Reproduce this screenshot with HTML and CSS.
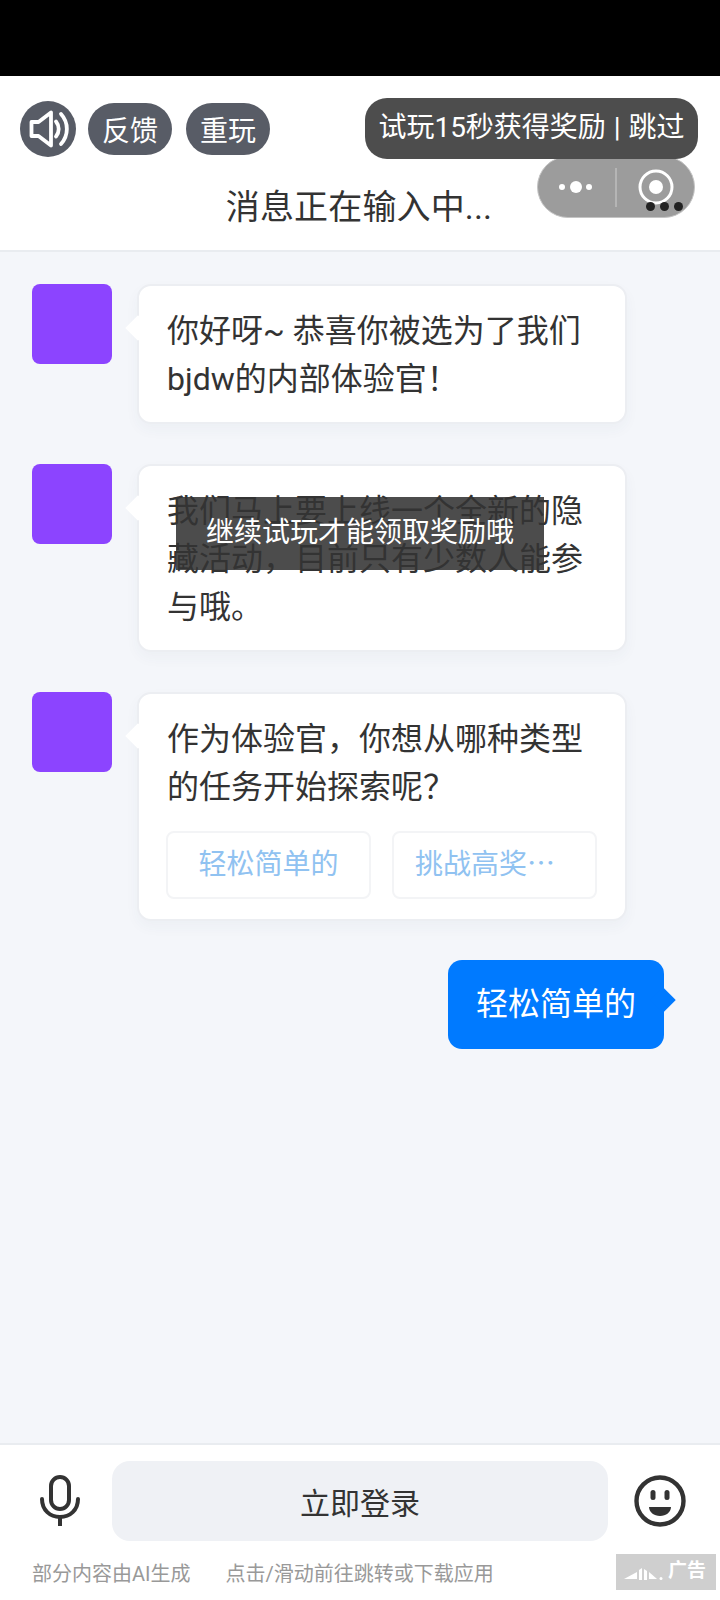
FILE: index.html
```html
<!DOCTYPE html>
<html lang="zh">
<head>
    <meta charset="UTF-8">
    <meta name="viewport" content="width=device-width, initial-scale=1.0">
    <title>消息正在输入中...</title>
    <link rel="stylesheet" href="styles.css">
</head>
<body>
    <div class="page">
        <div class="status-bar"></div>

        <header class="header">
            <div class="tools">
                <button class="sound-btn" type="button">
                    <svg width="56" height="56" viewBox="0 0 56 56" fill="none" stroke="#fff" stroke-width="3.8" stroke-linejoin="round" stroke-linecap="round">
                        <path d="M11.5 21h7L31 11.5v33L18.5 35h-7z"/>
                        <path d="M36 20.5c3.600 4.400 3.600 10.600 0 15"/>
                        <path d="M41 13c7.800 8.600 7.800 21.400 0 30"/>
                    </svg>
                </button>
                <button class="tool-pill" type="button">反馈</button>
                <button class="tool-pill tool-pill-last" type="button">重玩</button>
                <div class="skip-pill">试玩15秒获得奖励 | 跳过</div>
            </div>
            <h1 class="title">消息正在输入中...</h1>
        </header>

        <!-- 小程序胶囊，盖在头部上面 -->
        <div class="capsule">
            <svg width="56" height="20" viewBox="0 0 56 20" fill="#fff">
                <circle cx="10" cy="10" r="3"/>
                <circle cx="24" cy="10" r="6"/>
                <circle cx="37" cy="10" r="3"/>
            </svg>
            <span class="capsule-line"></span>
            <svg width="38" height="38" viewBox="0 0 38 38" fill="#fff">
                <circle cx="19" cy="19" r="16" fill="none" stroke="#fff" stroke-width="3"/>
                <circle cx="19" cy="19" r="7"/>
            </svg>
        </div>
        <div class="more-dots"><span></span><span></span><span></span></div>

        <main class="chat">
            <div class="msg">
                <div class="avatar"></div>
                <div class="bubble">你好呀~ 恭喜你被选为了我们bjdw的内部体验官！</div>
            </div>
            <div class="msg">
                <div class="avatar"></div>
                <div class="bubble">我们马上要上线一个全新的隐藏活动，目前只有少数人能参与哦。</div>
            </div>
            <div class="msg">
                <div class="avatar"></div>
                <div class="bubble">
                    作为体验官，你想从哪种类型的任务开始探索呢？
                    <div class="options">
                        <div class="option">轻松简单的</div>
                        <div class="option option-clip">挑战高奖⋯</div>
                    </div>
                </div>
            </div>
            <div class="msg msg-me">
                <div class="bubble-me">轻松简单的</div>
            </div>
        </main>

        <div class="toast">继续试玩才能领取奖励哦</div>

        <footer class="footer">
            <div class="input-row">
                <svg class="mic" width="40" height="52" viewBox="0 0 40 52" fill="none" stroke="#333" stroke-width="4" stroke-linecap="round">
                    <rect x="11" y="2" width="18" height="32" rx="9"/>
                    <path d="M2 24c0 11 8 18 18 18s18-7 18-18"/>
                    <path d="M20 42v9" stroke-linecap="butt"/>
                </svg>
                <button class="login-btn" type="button">立即登录</button>
                <svg class="smile" width="52" height="52" viewBox="0 0 52 52" fill="none">
                    <circle cx="26" cy="26" r="23.500" stroke="#333" stroke-width="4.400"/>
                    <rect x="16.500" y="15" width="5" height="10" rx="2.500" fill="#333"/>
                    <rect x="30.500" y="15" width="5" height="10" rx="2.500" fill="#333"/>
                    <path d="M15 32h22c0 5-5 9-11 9s-11-4-11-9z" fill="#333"/>
                </svg>
            </div>
            <div class="note-row">
                <span class="note">部分内容由AI生成</span>
                <span class="note note-link">点击/滑动前往跳转或下载应用</span>
                <div class="ad-badge">
                    <svg width="39" height="12" viewBox="0 0 39 12" fill="#fff">
                        <path d="M0 11 13 4v7z"/>
                        <path d="M15 2l3-2v12h-3z"/>
                        <path d="M20 1l3 2v9h-3z"/>
                        <path d="M25 4l8 7h-8z"/>
                        <circle cx="37" cy="10.500" r="1.500"/>
                    </svg>
                    <span>广告</span>
                </div>
            </div>
        </footer>
    </div>
</body>
</html>
```

FILE: styles.css
```css
* {
    box-sizing: border-box;
}

body {
    margin: 0;
    font-family: Roboto, "Noto Sans CJK SC", sans-serif;
    color: #333;
    background-color: #f4f6fa;
}

button {
    font-family: inherit;
    border: none;
    padding: 0;
}

.page {
    position: relative;
    width: 720px;
    height: 1600px;
    display: flex;
    flex-direction: column;
    overflow: hidden;
}

.status-bar {
    height: 76px;
    background-color: #000;
}

.header {
    background-color: #fff;
    border-bottom: 2px solid #e9ecf0;
    padding: 22px 22px 19px 20px;
}

.tools {
    display: flex;
    align-items: center;
}

.sound-btn {
    width: 56px;
    height: 56px;
    border-radius: 50%;
    background-color: #585c66;
}

.sound-btn svg {
    display: block;
}

.tool-pill {
    width: 84px;
    height: 52px;
    margin-left: 12px;
    border-radius: 26px;
    background-color: #585c66;
    color: #fff;
    font-size: 28px;
}

.tool-pill-last {
    margin-left: 14px;
}

.skip-pill {
    position: relative;
    z-index: 3;
    margin-left: auto;
    width: 333px;
    height: 61px;
    line-height: 60px;
    text-align: center;
    border-radius: 22px;
    background-color: #4d4d4d;
    color: #fff;
    font-size: 28px;
    word-spacing: 1px;
    white-space: nowrap;
}

.title {
    margin: 24px 0 0;
    font-size: 34px;
    font-weight: 400;
    letter-spacing: 0.15px;
    line-height: 48px;
    text-align: center;
}

.capsule {
    position: absolute;
    z-index: 2;
    left: 537px;
    top: 156px;
    width: 158px;
    height: 62px;
    border-radius: 31px;
    background-color: #9c9c9c;
    border: 1px solid #c4c4c4;
    display: flex;
    align-items: center;
    padding-left: 14px;
}

.capsule-line {
    width: 2px;
    height: 39px;
    margin: 0 20px 0 7px;
    background-color: #b5b5b5;
}

.capsule svg {
    flex-shrink: 0;
}

.more-dots {
    position: absolute;
    z-index: 2;
    left: 646px;
    top: 202px;
    display: flex;
    gap: 5px;
}

.more-dots span {
    width: 9px;
    height: 9px;
    border-radius: 50%;
    background-color: #222;
}

.chat {
    flex: 1;
    padding: 32px 56px 0 32px;
    display: flex;
    flex-direction: column;
    gap: 40px;
}

.msg {
    display: flex;
    align-items: flex-start;
}

.msg-me {
    justify-content: flex-end;
    margin-top: -1px;
}

.avatar {
    width: 80px;
    height: 80px;
    flex-shrink: 0;
    border-radius: 8px;
    background-color: #8c44ff;
}

.bubble {
    position: relative;
    width: 490px;
    margin-left: 25px;
    padding: 21px 28px 19px;
    background-color: #fff;
    border: 2px solid #eceef2;
    border-radius: 14px;
    box-shadow: 0 6px 14px rgba(60, 70, 100, 0.04);
    font-size: 32px;
    line-height: 48px;
}

.bubble::before {
    content: "";
    position: absolute;
    left: -10px;
    top: 33px;
    width: 18px;
    height: 18px;
    background-color: #fff;
    transform: rotate(45deg);
}

.options {
    display: flex;
    gap: 21px;
    margin: 20px -1px 1px;
}

.option {
    width: 205px;
    height: 68px;
    line-height: 64px;
    text-align: center;
    border: 2px solid #f3f4f6;
    border-radius: 8px;
    color: #90c2f1;
    font-size: 28px;
}

.option-clip {
    text-align: left;
    padding-left: 21px;
}

.bubble-me {
    position: relative;
    padding: 20px 28px 21px;
    background-color: #007aff;
    border-radius: 14px;
    color: #fff;
    font-size: 32px;
    line-height: 48px;
}

.bubble-me::after {
    content: "";
    position: absolute;
    right: -8px;
    top: 31px;
    width: 18px;
    height: 18px;
    background-color: #007aff;
    transform: rotate(45deg);
}

.toast {
    position: absolute;
    z-index: 4;
    left: 176px;
    top: 497px;
    width: 368px;
    height: 73px;
    line-height: 72px;
    text-align: center;
    background-color: rgba(51, 51, 51, 0.88);
    color: #fff;
    font-size: 28px;
}

.footer {
    background-color: #fff;
    border-top: 2px solid #e9ecf0;
    padding: 16px 4px 10px 0;
}

.input-row {
    display: flex;
    align-items: center;
    padding-left: 40px;
}

.mic {
    flex-shrink: 0;
}

.login-btn {
    width: 496px;
    height: 80px;
    margin: 0 26px 0 32px;
    border-radius: 18px;
    background-color: #eff1f5;
    color: #333;
    font-size: 30px;
}

.smile {
    flex-shrink: 0;
}

.note-row {
    display: flex;
    align-items: center;
    margin-top: 13px;
    padding-left: 32px;
}

.note {
    font-size: 20px;
    color: #999;
}

.note-link {
    margin-left: 35px;
}

.ad-badge {
    width: 100px;
    height: 36px;
    margin-left: auto;
    padding-left: 8px;
    display: flex;
    align-items: center;
    gap: 5px;
    background-color: #cfcfcf;
    color: #fff;
    font-size: 19px;
    font-weight: 700;
}

.ad-badge svg {
    margin-top: 4px;
    flex-shrink: 0;
}

.ad-badge span {
    white-space: nowrap;
    margin-top: -8px;
}
```
